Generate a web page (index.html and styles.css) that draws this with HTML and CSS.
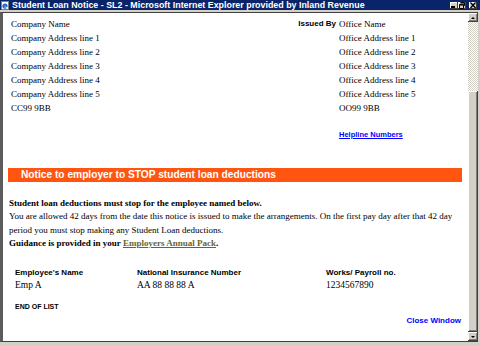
FILE: index.html
```html
<!DOCTYPE html>
<html>
<head>
<meta charset="utf-8">
<title>Student Loan Notice - SL2</title>
<link rel="stylesheet" href="styles.css">
</head>
<body>
<div class="window">
  <div class="titlebar">
    <svg class="ie-icon" width="9" height="9" viewBox="0 0 9 9">
      <rect x="0.5" y="0.5" width="7" height="8" fill="#fff" stroke="#808080"/>
      <path d="M2 5 h4 a2 2 0 1 0 -0.6 1.6" fill="none" stroke="#1060d0" stroke-width="1.3"/>
    </svg>
    <span class="title">Student Loan Notice - SL2 - Microsoft Internet Explorer provided by Inland Revenue</span>
    <div class="controls">
      <span class="btn"><svg width="8" height="7" viewBox="0 0 8 7"><rect x="1" y="4" width="4" height="2" fill="#000"/></svg></span>
      <span class="btn"><svg width="8" height="7" viewBox="0 0 8 7"><path d="M2.5 0.5h4v3h-1M1.5 2.5h4v4h-4z" fill="none" stroke="#000"/><path d="M2.5 1h4M1.5 3h4" stroke="#000"/></svg></span>
      <span class="btn close"><svg width="8" height="7" viewBox="0 0 8 7"><path d="M1.5 0.5l5 5.5M6.5 0.5l-5 5.5" stroke="#000" stroke-width="1.3"/></svg></span>
    </div>
  </div>
  <div class="frame">
    <div class="page">
      <div class="header">
        <div class="company">
          <div>Company Name</div>
          <div>Company Address line 1</div>
          <div>Company Address line 2</div>
          <div>Company Address line 3</div>
          <div>Company Address line 4</div>
          <div>Company Address line 5</div>
          <div>CC99 9BB</div>
        </div>
        <div class="issuer">
          <div class="label">Issued By</div>
          <div class="office">
            <div>Office Name</div>
            <div>Office Address line 1</div>
            <div>Office Address line 2</div>
            <div>Office Address line 3</div>
            <div>Office Address line 4</div>
            <div>Office Address line 5</div>
            <div>OO99 9BB</div>
          </div>
        </div>
      </div>
      <a class="helpline" href="#">Helpline Numbers</a>
      <div class="banner">Notice to employer to STOP student loan deductions</div>
      <div class="intro">Student loan deductions must stop for the employee named below.</div>
      <div class="para">You are allowed 42 days from the date this notice is issued to make the arrangements. On the first pay day after that 42 day<br>period you must stop making any Student Loan deductions.</div>
      <div class="guidance">Guidance is provided in your <a class="pack" href="#">Employers Annual Pack</a>.</div>
      <div class="emp-table">
        <div class="th">Employee's Name</div>
        <div class="th">National Insurance Number</div>
        <div class="th">Works/ Payroll no.</div>
        <div class="td">Emp A</div>
        <div class="td">AA 88 88 88 A</div>
        <div class="td">1234567890</div>
      </div>
      <div class="end">END OF LIST</div>
      <div class="close-row"><a class="close-link" href="#">Close Window</a></div>
    </div>
    <div class="scrollbar">
      <div class="sbtn"><span class="arrow up"></span></div>
      <div class="track"></div>
      <div class="thumb"></div>
      <div class="sbtn"><span class="arrow down"></span></div>
    </div>
  </div>
</div>
</body>
</html>
```
FILE: styles.css
```css
html, body {
  margin: 0;
  padding: 0;
  background: #d4d0c8;
}
.window {
  width: 480px;
  height: 346px;
  background: #d4d0c8;
  display: flex;
  flex-direction: column;
  overflow: hidden;
}
.titlebar {
  height: 10px;
  flex: none;
  background: #0a246a;
  display: flex;
  align-items: center;
  position: relative;
}
.ie-icon {
  margin-left: 1px;
  flex: none;
}
.title {
  margin-left: 2px;
  color: #fff;
  font-family: "Liberation Sans", Arial, sans-serif;
  font-weight: bold;
  font-size: 8.9px;
  line-height: 10px;
  white-space: nowrap;
}
.controls {
  margin-left: auto;
  margin-right: 3px;
  display: flex;
  align-items: center;
}
.btn {
  width: 8px;
  height: 7px;
  background: #d4d0c8;
  box-shadow: inset -1px -1px #404040, inset 1px 1px #fff;
  display: flex;
}
.btn.close {
  margin-left: 3px;
}
.frame {
  flex: 1;
  display: flex;
  margin-top: 2px;
  margin-right: 2px;
  margin-bottom: 4px;
  border-top: 1px solid #404040;
  border-bottom: 1px solid #404040;
  border-left: 3px solid #5c5c5c;
  min-height: 0;
}
.page {
  flex: 1;
  background: #fff;
  padding: 4px 6px 0 0;
  font-family: "Liberation Serif", "Times New Roman", serif;
  font-size: 9px;
  color: #000;
  display: flex;
  flex-direction: column;
  overflow: hidden;
}
.header {
  display: flex;
}
.company {
  flex: 1;
  padding-left: 8px;
  line-height: 14px;
}
.issuer {
  display: grid;
  grid-template-columns: 60px 123px;
  column-gap: 3px;
}
.label {
  text-align: right;
  font-family: "Liberation Sans", Arial, sans-serif;
  font-weight: bold;
  font-size: 8px;
  line-height: 13px;
}
.office {
  line-height: 14px;
}
.helpline {
  margin-top: 13px;
  margin-left: 336px;
  align-self: flex-start;
  line-height: 14px;
  color: #0000ff;
  font-family: "Liberation Sans", Arial, sans-serif;
  font-weight: bold;
  font-size: 7.5px;
  text-decoration: underline;
}
.banner {
  margin-top: 26px;
  margin-left: 5px;
  height: 14px;
  line-height: 14px;
  padding-left: 13px;
  background: #ff5511;
  color: #fff;
  font-family: "Liberation Sans", Arial, sans-serif;
  font-weight: bold;
  font-size: 10.2px;
  white-space: nowrap;
}
.intro {
  margin-top: 14.5px;
  padding-left: 6px;
  line-height: 13.5px;
  font-weight: bold;
  white-space: nowrap;
}
.para {
  padding-left: 6px;
  line-height: 13.5px;
  white-space: nowrap;
}
.guidance {
  padding-left: 6px;
  line-height: 13.5px;
  font-weight: bold;
  white-space: nowrap;
}
.pack {
  color: #666633;
  text-decoration: underline;
}
.emp-table {
  margin-top: 15px;
  padding-left: 12px;
  display: grid;
  grid-template-columns: 122px 189px 1fr;
}
.th {
  font-family: "Liberation Sans", Arial, sans-serif;
  font-weight: bold;
  font-size: 8px;
  line-height: 13px;
  white-space: nowrap;
}
.td {
  line-height: 13px;
  font-size: 9.5px;
  white-space: nowrap;
}
.end {
  margin-top: 8.5px;
  padding-left: 12px;
  line-height: 13px;
  font-family: "Liberation Sans", Arial, sans-serif;
  font-weight: bold;
  font-size: 7px;
}
.close-row {
  margin-top: 1px;
  text-align: right;
  padding-right: 1px;
  line-height: 13px;
}
.close-link {
  color: #0000ff;
  text-decoration: none;
  font-family: "Liberation Sans", Arial, sans-serif;
  font-weight: bold;
  font-size: 8px;
}
.scrollbar {
  width: 10px;
  flex: none;
  display: flex;
  flex-direction: column;
}
.sbtn {
  height: 9px;
  flex: none;
  background: #d4d0c8;
  box-shadow: inset -1px -1px #404040, inset 1px 1px #fff, inset -2px -2px #808080;
  display: flex;
  align-items: center;
  justify-content: center;
}
.arrow {
  width: 0;
  height: 0;
  border-left: 2px solid transparent;
  border-right: 2px solid transparent;
}
.arrow.up {
  border-bottom: 2px solid #000;
}
.arrow.down {
  border-top: 2px solid #000;
}
.track {
  height: 69px;
  flex: none;
  background-color: #d4d0c8;
  background-image: repeating-conic-gradient(#ffffff 0 25%, #d4d0c8 0 50%);
  background-size: 2px 2px;
}
.thumb {
  flex: 1;
  background: #d4d0c8;
  box-shadow: inset -1px -1px #404040, inset 1px 1px #fff, inset -2px -2px #808080;
}
```
